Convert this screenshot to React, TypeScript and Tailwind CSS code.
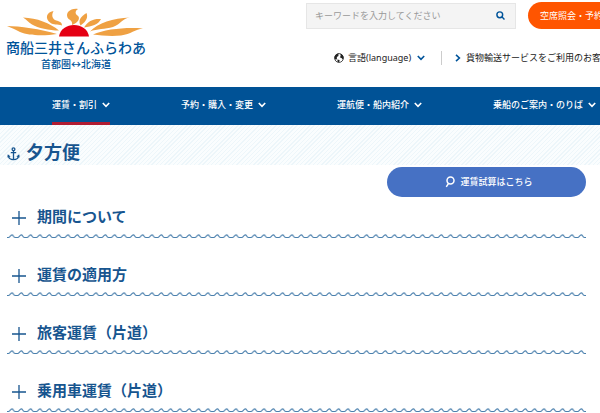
import { useState } from 'react';

const navItems = ['運賃・割引', '予約・購入・変更', '運航便・船内紹介', '乗船のご案内・のりば'];

const sections = ['期間について', '運賃の適用方', '旅客運賃（片道）', '乗用車運賃（片道）'];

const Chevron = ({ className }: { className?: string }) => (
  <svg viewBox="0 0 8 6" className={className} fill="none" stroke="currentColor" strokeWidth="1.6" aria-hidden="true">
    <path d="M0.8 1 L4 4.4 L7.2 1" />
  </svg>
);

const SunLogo = () => (
  <svg viewBox="0 0 138 30" className="h-[30px] w-full overflow-visible" aria-hidden="true">
    <g fill="#efa143">
      <path d="M0 17 C12 17 34 20 50 25 C38 27 22 27 13 23 C8 20.5 5 19 0 17Z" />
      <path d="M16 8.5 C30 9 43 14 52 21.5 C42 21.5 31 19 25 15.5 C21 13 20 11 16 8.5Z" />
      <path d="M46.500 2 C39 3 38 10 43 13.5 C47 16.5 50 15 55 16.5 C55 12 51 12.5 48 11 C45 9 44.5 6 46.5 2Z" />
      <path d="M71 0 C63 -1 58.5 4 60.5 8.5 C62 11.5 66 11 65 16 C71 14 74 9 70.5 6.500 C67.5 4.500 68.500 1.500 71 0Z" />
      <path d="M79.500 4 C81 8 80 12 73.500 16.500 C71 12 73 8 79.500 4Z" />
      <path d="M94 10 C91 16 85 17 77 18.500 C81 12 86 9.500 94 10Z" />
      <path d="M123 8.500 C115 9.500 114 15 106 18 C98 20.500 90 19.500 83 22.500 C91 14 106 9 123 8.500Z" />
      <path d="M136 19.5 C128 20.500 124 25 114 26.5 C104 27.500 94 26.500 86 25.500 C98 20 120 18 136 19.500Z" />
    </g>
    <path d="M52 27.5 C54 12 80 12 82 27.5Z" fill="#e50014" />
  </svg>
);

const GlobeIcon = () => (
  <svg viewBox="0 0 10 10" className="size-[10px]" aria-hidden="true">
    <circle cx="5" cy="5" r="4.4" fill="#fff" stroke="#222" strokeWidth="0.8" />
    <path d="M5 0.5 C2 0.3 0.3 2.5 0.5 5.3 L2 7 L3 5.5 L2.8 4 L4.5 3 L4.3 1.6Z" fill="#222" />
    <path d="M6.3 0.8 L6.7 3 L5.8 4.2 L7.8 5.2 L8.8 6.5 L9.5 5 C9.5 3 8.3 1.2 6.3 0.8Z M3.4 6.4 L5.6 7 L5.2 9.3 L3.6 9Z" fill="#222" />
  </svg>
);

const AnchorIcon = () => (
  <svg viewBox="0 0 13 14" className="mt-[4px] h-[14px] w-[13px]" fill="none" stroke="currentColor" strokeWidth="1.3" aria-hidden="true">
    <circle cx="6.5" cy="2.2" r="1.4" />
    <path d="M6.5 3.6 V12.5 M3.8 5.7 H9.2 M1.3 8.5 C1.6 11.3 4 12.6 6.5 12.6 C9 12.6 11.4 11.3 11.7 8.5" />
    <path d="M0.4 10.5 L0.8 7.3 L3.6 9.4Z M12.6 10.5 L12.2 7.3 L9.4 9.4Z" fill="currentColor" stroke="none" />
  </svg>
);

const Wave = () => (
  <svg className="block h-[5px] w-full" aria-hidden="true">
    <defs>
      <pattern id="wave" width="9.333" height="5" patternUnits="userSpaceOnUse">
        <path d="M0 3.5 H1.5 C2.8 3.5 3.4 0.9 5 0.9 C6.4 0.9 6.2 3.5 8 3.5 H9.4" fill="none" stroke="#4a80ad" strokeWidth="1.1" />
      </pattern>
    </defs>
    <rect width="100%" height="5" fill="url(#wave)" />
  </svg>
);

const Header = () => (
  <header className="flex h-[87px] items-start justify-between overflow-hidden">
    <a href="#" className="mt-[9px] ml-[6px] flex w-[140px] shrink-0 flex-col items-center whitespace-nowrap text-[#00549a]">
      <SunLogo />
      <span className="text-[14px] leading-[18px] font-medium">商船三井さんふらわあ</span>
      <span className="text-[10px] leading-[14px] font-medium">首都圏↔北海道</span>
    </a>
    <div className="w-[294px] shrink-0 text-[9px] whitespace-nowrap">
      <div className="mt-[2px] flex items-center gap-3">
        <form className="flex h-[26px] w-[210px] shrink-0 items-center justify-between border border-[#e6e6e6] bg-[#f4f4f4] pr-[10px] pl-2" onSubmit={(e) => e.preventDefault()}>
          <input type="text" aria-label="キーワード" placeholder="キーワードを入力してください" className="w-[150px] outline-none placeholder:text-[#999]" />
          <button type="submit" aria-label="検索" className="text-[#00549a]">
            <svg viewBox="0 0 10 10" className="size-[9px]" fill="none" stroke="currentColor" strokeWidth="1.6">
              <circle cx="4.2" cy="4.2" r="3.2" />
              <path d="M6.5 6.5 L9.4 9.4" />
            </svg>
          </button>
        </form>
        <a href="#" className="flex h-[27px] shrink-0 items-center rounded-full bg-[#ff5500] px-3 text-white">
          空席照会・予約
        </a>
      </div>
      <div className="mt-[22px] flex h-[14px] items-center pl-[28px] text-[#222]">
        <button type="button" className="flex items-center">
          <GlobeIcon />
          <span className="ml-1">言語(language)</span>
          <Chevron className="ml-[6px] h-[6px] w-[8px] text-[#00549a]" />
        </button>
        <a href="#" className="ml-4 flex h-full items-center border-l border-[#ccc] pl-3">
          <Chevron className="mr-1 h-[6px] w-[8px] -rotate-90 text-[#00549a]" />
          貨物輸送サービスをご利用のお客様
        </a>
      </div>
    </div>
  </header>
);

const Nav = () => (
  <nav className="overflow-hidden bg-[#005296] text-[9px] font-medium text-white">
    <ul className="flex h-[38px] gap-[71px] pl-[52px] whitespace-nowrap">
      {navItems.map((item, i) => (
        <li key={item} className="shrink-0">
          <a href="#" className={`flex h-full items-center gap-[5px] border-b-3 ${i === 0 ? 'border-[#b01c32]' : 'border-transparent'}`}>
            {item}
            <Chevron className="h-[6px] w-[8px]" />
          </a>
        </li>
      ))}
    </ul>
  </nav>
);

const Section = ({ title }: { title: string }) => {
  const [open, setOpen] = useState(false);

  return (
    <section>
      <h2>
        <button type="button" aria-expanded={open} onClick={() => setOpen(!open)} className="flex h-[53px] w-full items-center pt-[18px] pl-[5px] text-[15px] font-bold">
          <svg viewBox="0 0 14 14" className="mt-[2px] mr-[11px] size-[14px]" stroke="currentColor" strokeWidth="1.3" aria-hidden="true">
            <path d={open ? 'M0 7 H14' : 'M0 7 H14 M7 0 V14'} />
          </svg>
          {title}
        </button>
      </h2>
      <Wave />
    </section>
  );
};

export default function App() {
  return (
    <div className="overflow-hidden bg-white font-['Noto_Sans','Noto_Sans_CJK_JP',sans-serif] text-[#17558f]">
      <Header />
      <Nav />
      <main>
        <div className="flex h-[40px] items-center gap-[6px] bg-[repeating-linear-gradient(135deg,#edf6fa_0px,#edf6fa_1px,#fafdfe_1px,#fafdfe_3px)] pt-[14px] pl-[7px]">
          <AnchorIcon />
          <h1 className="text-[18px] leading-[26px] font-bold">夕方便</h1>
        </div>
        <div className="pr-[14px] pl-[7px]">
          <div className="flex justify-end pt-[2px]">
            <a href="#" className="flex h-[30px] w-[199px] items-center justify-center gap-[5px] rounded-full bg-[#4671c4] pl-[5px] text-[9px] font-medium text-white">
              <svg viewBox="0 0 10 12" className="h-[12px] w-[10px]" fill="none" stroke="currentColor" strokeWidth="1.5" aria-hidden="true">
                <circle cx="5.5" cy="4.5" r="3.5" />
                <path d="M3.5 7.3 L1.3 10.8" />
              </svg>
              運賃試算はこちら
            </a>
          </div>
          <div className="-mt-[16px]">
            {sections.map((title) => (
              <Section key={title} title={title} />
            ))}
          </div>
        </div>
      </main>
    </div>
  );
}
